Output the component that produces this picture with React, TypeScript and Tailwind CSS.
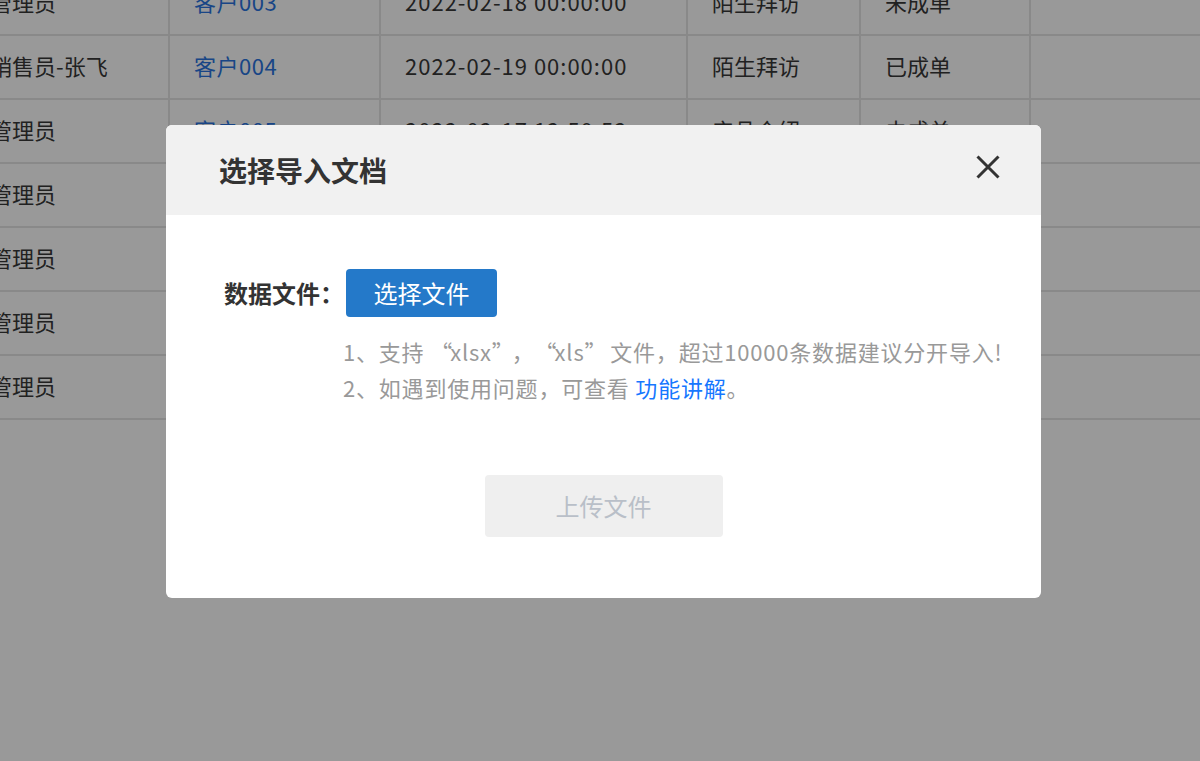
import React from 'react';

const rows = [
  ['管理员', '客户003', '2022-02-18 00:00:00', '陌生拜访', '未成单'],
  ['销售员-张飞', '客户004', '2022-02-19 00:00:00', '陌生拜访', '已成单'],
  ['管理员', '客户005', '2022-02-17 12:50:52', '产品介绍', '未成单'],
  ['管理员', '客户006', '2022-02-16 09:30:00', '电话回访', '已成单'],
  ['管理员', '客户007', '2022-02-15 10:20:00', '陌生拜访', '未成单'],
  ['管理员', '客户008', '2022-02-14 14:00:00', '产品介绍', '已成单'],
  ['管理员', '客户009', '2022-02-13 16:45:00', '电话回访', '未成单'],
];

const font = { fontFamily: '"Noto Sans CJK SC", "Noto Sans", sans-serif' };

// full-width quote boxes, like the reference
const L = () => <span className="inline-block w-[20px] text-right">“</span>;
const R = () => <span className="inline-block w-[20px] text-left">”</span>;

export default function App() {
  return (
    <div className="relative h-[761px] w-[1200px] overflow-hidden bg-white" style={font}>
      {/* Table behind the mask */}
      <div className="ml-[-34px] mt-[-28px] w-[1300px]">
        {rows.map((r, i) => (
          <div key={i} className="flex h-16 border-b-2 border-[#e4e4e4] text-[22px] text-[#383838]">
            <div className="flex w-[204px] shrink-0 items-center border-r-2 border-[#e4e4e4] pb-[3px] pl-6">{r[0]}</div>
            <div className="flex w-[211px] shrink-0 items-center border-r-2 border-[#e4e4e4] pb-[3px] pl-6 tracking-[0.5px] text-[#2a74e0]">{r[1]}</div>
            <div className="flex w-[307px] shrink-0 items-center border-r-2 border-[#e4e4e4] pb-[3px] pl-6 tracking-[1px]">{r[2]}</div>
            <div className="flex w-[173px] shrink-0 items-center border-r-2 border-[#e4e4e4] pb-[3px] pl-6">{r[3]}</div>
            <div className="flex w-[170px] shrink-0 items-center border-r-2 border-[#e4e4e4] pb-[3px] pl-6">{r[4]}</div>
            <div className="flex-1" />
          </div>
        ))}
      </div>

      {/* Mask + dialog */}
      <div className="fixed inset-0 flex items-start justify-center bg-black/40 pl-[7px] pt-[125px]">
        <div className="w-[875px] overflow-hidden rounded-md bg-white">
          <div className="flex h-[90px] items-center justify-between bg-[#f1f1f1] pl-[53px] pr-[41px]">
            <h2 className="text-[28px] font-bold text-[#333]">选择导入文档</h2>
            <svg width="24" height="24" viewBox="0 0 24 24" className="mt-[-6px] text-[#333]">
              <path d="M1.5 1.5 22.5 22.5M22.5 1.5 1.5 22.5" stroke="currentColor" strokeWidth="3" fill="none" />
            </svg>
          </div>

          <div className="px-[58px] pb-[61px] pt-[54px]">
            <div className="flex items-center">
              <span className="w-[122px] shrink-0 text-[24px] font-bold text-[#333]">数据文件：</span>
              <button className="h-12 w-[151px] rounded bg-[#2479c9] text-[24px] text-white">选择文件</button>
            </div>
            <div className="ml-[119px] mt-4 whitespace-nowrap text-[22px] leading-9 tracking-[0.8px] text-[#999]">
              <p>
                1、支持 <L />xlsx<R />，<L />xls<R /> 文件，超过10000条数据建议分开导入!
              </p>
              <p>
                2、如遇到使用问题，可查看 <span className="text-[#1677ff]">功能讲解</span>。
              </p>
            </div>
            <div className="mt-[70px] flex justify-center">
              <button className="h-[62px] w-[238px] rounded bg-[#efefef] text-[24px] text-[#b9bfc8]">上传文件</button>
            </div>
          </div>
        </div>
      </div>
    </div>
  );
}
